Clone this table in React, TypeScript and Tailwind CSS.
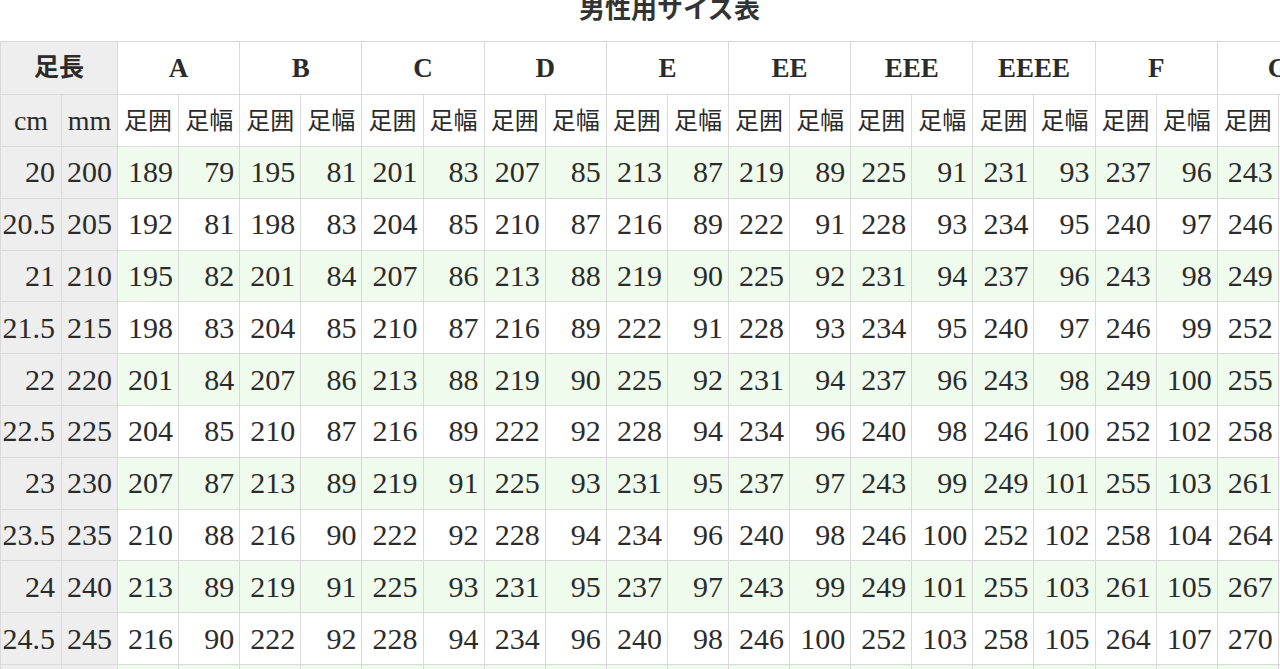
import React from "react";

const sizes = ["A", "B", "C", "D", "E", "EE", "EEE", "EEEE", "F", "G"];

// 足長 cm / mm, then 足囲・足幅 pairs for A..G
const rows: [string, string, string][] = [
  ["20", "200", "189 79 195 81 201 83 207 85 213 87 219 89 225 91 231 93 237 96 243 98"],
  ["20.5", "205", "192 81 198 83 204 85 210 87 216 89 222 91 228 93 234 95 240 97 246 99"],
  ["21", "210", "195 82 201 84 207 86 213 88 219 90 225 92 231 94 237 96 243 98 249 100"],
  ["21.5", "215", "198 83 204 85 210 87 216 89 222 91 228 93 234 95 240 97 246 99 252 101"],
  ["22", "220", "201 84 207 86 213 88 219 90 225 92 231 94 237 96 243 98 249 100 255 102"],
  ["22.5", "225", "204 85 210 87 216 89 222 92 228 94 234 96 240 98 246 100 252 102 258 104"],
  ["23", "230", "207 87 213 89 219 91 225 93 231 95 237 97 243 99 249 101 255 103 261 105"],
  ["23.5", "235", "210 88 216 90 222 92 228 94 234 96 240 98 246 100 252 102 258 104 264 106"],
  ["24", "240", "213 89 219 91 225 93 231 95 237 97 243 99 249 101 255 103 261 105 267 107"],
  ["24.5", "245", "216 90 222 92 228 94 234 96 240 98 246 100 252 103 258 105 264 107 270 109"],
  ["25", "250", "219 91 225 93 231 95 237 97 243 99 249 101 255 104 261 106 267 108 273 110"],
];

const font = { fontFamily: '"Liberation Serif", "Noto Sans CJK JP", serif' };

export default function App() {
  return (
    <div className="w-[1280px] h-[669px] overflow-hidden bg-white text-[#2b2b2b]" style={font}>
      <div className="w-[1339px]">
        {/* TITLE */}
        <div className="h-[41px] flex justify-center">
          <div className="-mt-[3px] text-[26px] leading-[26px] font-bold text-[#333]">男性用サイズ表</div>
        </div>
        {/* TABLE */}
        <table className="table-fixed border-collapse w-[1339px]">
          <colgroup>
            <col className="w-[61px]" />
            <col className="w-[56px]" />
            {sizes.map((s) => (
              <React.Fragment key={s}>
                <col className="w-[61.1px]" />
                <col className="w-[61.1px]" />
              </React.Fragment>
            ))}
          </colgroup>
          <thead>
            <tr className="h-[53px]">
              <th colSpan={2} className="border border-[#d9d9d9] bg-[#eeeeee] p-0 text-[25px] font-bold">足長</th>
              {sizes.map((s) => (
                <th key={s} colSpan={2} className="border border-[#d9d9d9] bg-white p-0 text-[27px] font-bold">
                  {s}
                </th>
              ))}
            </tr>
            <tr className="h-[52px]">
              <th className="border border-[#d9d9d9] bg-[#eeeeee] p-0 text-[28px] font-normal">cm</th>
              <th className="border border-[#d9d9d9] bg-[#eeeeee] p-0 text-[28px] font-normal">mm</th>
              {sizes.map((s) => (
                <React.Fragment key={s}>
                  <th className="border border-[#d9d9d9] bg-white p-0 text-[24px] font-normal whitespace-nowrap">足囲</th>
                  <th className="border border-[#d9d9d9] bg-white p-0 text-[24px] font-normal whitespace-nowrap">足幅</th>
                </React.Fragment>
              ))}
            </tr>
          </thead>
          <tbody>
            {rows.map(([cm, mm, vals], i) => (
              <tr key={cm} className={i % 2 === 0 ? "h-[51.8px] bg-[#effbec]" : "h-[51.8px] bg-white"}>
                <td className="border border-[#d9d9d9] bg-[#eeeeee] p-0 pr-[6px] text-right text-[30px] leading-none whitespace-nowrap">{cm}</td>
                <td className="border border-[#d9d9d9] bg-[#eeeeee] p-0 pr-[5px] text-right text-[30px] leading-none whitespace-nowrap">{mm}</td>
                {vals.split(" ").map((v, j) => (
                  <td key={j} className="border border-[#d9d9d9] p-0 pr-[5px] text-right text-[30px] leading-none whitespace-nowrap">
                    {v}
                  </td>
                ))}
              </tr>
            ))}
          </tbody>
        </table>
      </div>
    </div>
  );
}
